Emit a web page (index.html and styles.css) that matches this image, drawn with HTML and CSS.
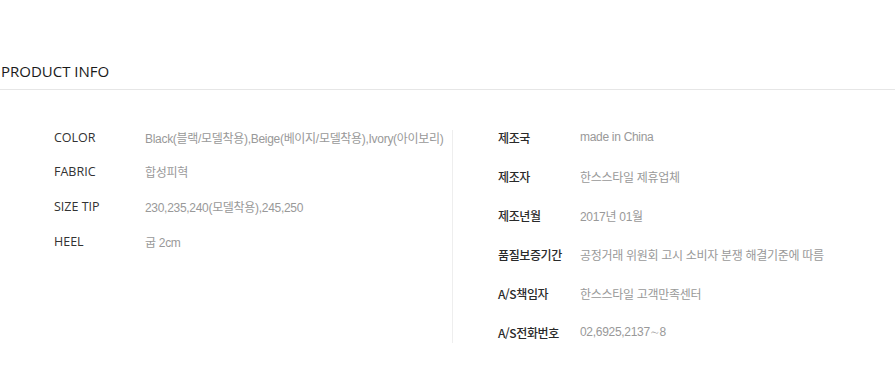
FILE: index.html
```html
<!DOCTYPE html>
<html lang="ko">
<head>
<meta charset="utf-8">
<title>PRODUCT INFO</title>
<link rel="stylesheet" href="styles.css">
</head>
<body>
<section class="info">
  <h2 class="info-title">PRODUCT INFO</h2>
  <div class="info-body">
    <dl class="spec spec-product">
      <div class="spec-row"><dt>COLOR</dt><dd>Black(블랙/모델착용),Beige(베이지/모델착용),Ivory(아이보리)</dd></div>
      <div class="spec-row"><dt>FABRIC</dt><dd>합성피혁</dd></div>
      <div class="spec-row"><dt>SIZE TIP</dt><dd>230,235,240(모델착용),245,250</dd></div>
      <div class="spec-row"><dt>HEEL</dt><dd>굽 2cm</dd></div>
    </dl>
    <dl class="spec spec-maker">
      <div class="spec-row"><dt>제조국</dt><dd>made in China</dd></div>
      <div class="spec-row"><dt>제조자</dt><dd>한스스타일 제휴업체</dd></div>
      <div class="spec-row"><dt>제조년월</dt><dd>2017년 01월</dd></div>
      <div class="spec-row"><dt>품질보증기간</dt><dd>공정거래 위원회 고시 소비자 분쟁 해결기준에 따름</dd></div>
      <div class="spec-row"><dt>A/S책임자</dt><dd>한스스타일 고객만족센터</dd></div>
      <div class="spec-row"><dt>A/S전화번호</dt><dd>02,6925,2137∼8</dd></div>
    </dl>
  </div>
</section>
</body>
</html>
```
FILE: styles.css
```css
html, body {
  margin: 0;
  padding: 0;
  background: #fff;
}

.info {
  font-family: "Liberation Sans", "Noto Sans CJK KR", sans-serif;
}

.info-title {
  margin: 61px 0 0;
  padding: 0 0 7px 1px;
  border-bottom: 1px solid #e6e6e6;
  font-family: "Open Sans", "Noto Sans CJK KR", sans-serif;
  font-size: 15px;
  line-height: 21px;
  font-weight: 400;
  color: #1a1a1a;
}

.info-body {
  display: grid;
  grid-template-columns: 452px 1fr;
  align-items: start;
  padding-top: 40px;
}

.spec {
  margin: 0;
  display: flex;
  flex-direction: column;
}

.spec-row {
  display: flex;
  align-items: center;
  height: 14px;
}

.spec dt {
  flex: none;
  color: #333;
}

.spec dd {
  margin: 0;
  color: #999;
  font-size: 12px;
  letter-spacing: -0.3px;
  white-space: nowrap;
}

.spec-product {
  padding-left: 54px;
  gap: 20.7px;
}

.spec-product dt {
  width: 91px;
  font-family: "Open Sans", sans-serif;
  font-size: 12.5px;
}

.spec-maker {
  border-left: 1px solid #eeeeee;
  padding: 0 0 4px 45px;
  gap: 25px;
}

.spec-maker dt {
  width: 82px;
  font-family: "Noto Sans CJK KR", sans-serif;
  font-size: 12px;
  font-weight: 500;
  letter-spacing: -0.4px;
  color: #2a2a2a;
}
```
